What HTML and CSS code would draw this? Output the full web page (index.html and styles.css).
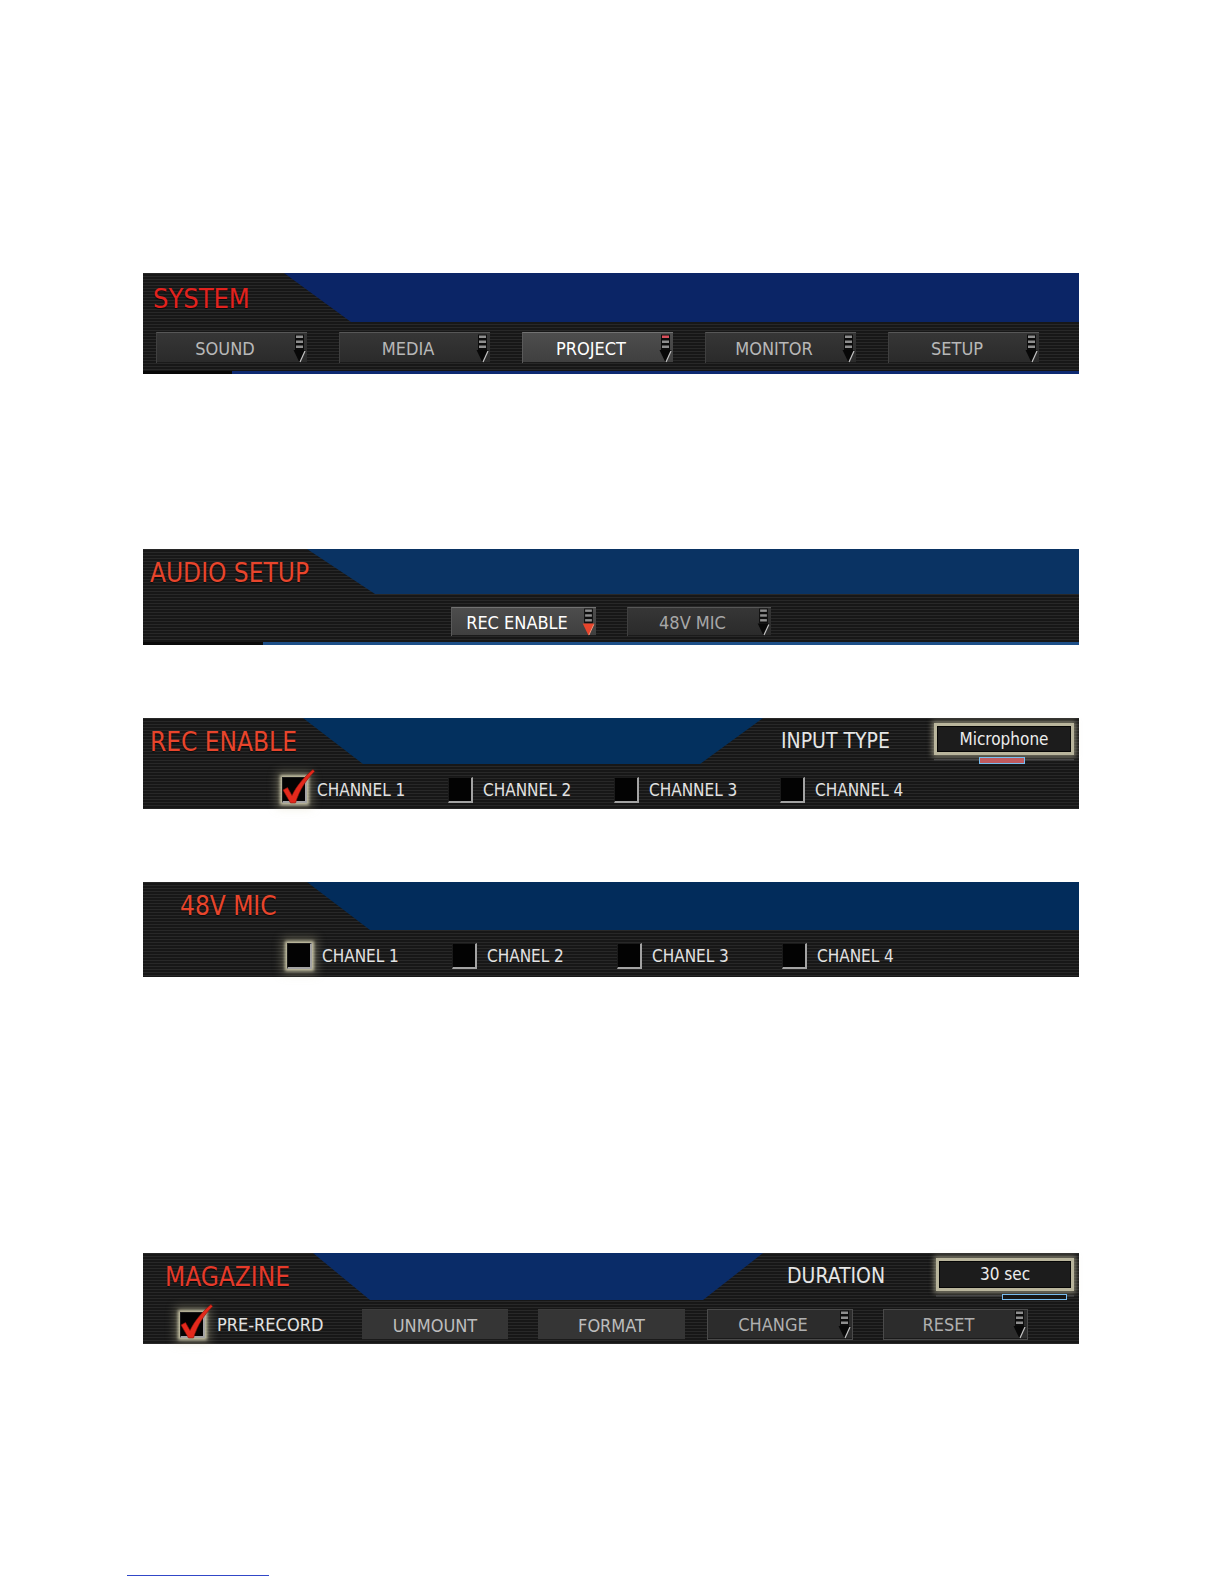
FILE: index.html
```html
<!DOCTYPE html>
<html lang="en">
<head>
<meta charset="utf-8">
<title>Menus</title>
<link rel="stylesheet" href="styles.css">
</head>
<body>
<svg class="defs" width="0" height="0" aria-hidden="true">
  <defs>
    <symbol id="arrow" viewBox="0 0 13 29">
      <rect x="2" y="0.5" width="9" height="15.5" fill="#0c0c0c"/>
      <rect x="3" y="1.5" width="7" height="2.5" fill="#8e8e8e"/>
      <rect x="3" y="6.5" width="7" height="2.5" fill="#8e8e8e"/>
      <rect x="3" y="11.5" width="7" height="2.5" fill="#8e8e8e"/>
      <polygon points="0.5,16 12.5,16 6.5,28.5" fill="#080808"/>
      <line x1="12" y1="17" x2="7" y2="28" stroke="#c4c4c4" stroke-width="1.2"/>
    </symbol>
    <symbol id="arrow-top" viewBox="0 0 13 29">
      <rect x="2" y="0.5" width="9" height="15.5" fill="#0c0c0c"/>
      <rect x="3" y="1.5" width="7" height="2.5" fill="#d8505c"/>
      <rect x="3" y="6.5" width="7" height="2.5" fill="#8e8e8e"/>
      <rect x="3" y="11.5" width="7" height="2.5" fill="#8e8e8e"/>
      <polygon points="0.5,16 12.5,16 6.5,28.5" fill="#080808"/>
      <line x1="12" y1="17" x2="7" y2="28" stroke="#c4c4c4" stroke-width="1.2"/>
    </symbol>
    <symbol id="arrow-red" viewBox="0 0 13 29">
      <rect x="2" y="0.5" width="9" height="15.5" fill="#0c0c0c"/>
      <rect x="3" y="1.5" width="7" height="2.5" fill="#8e8e8e"/>
      <rect x="3" y="6.5" width="7" height="2.5" fill="#8e8e8e"/>
      <rect x="3" y="11.5" width="7" height="2.5" fill="#8e8e8e"/>
      <polygon points="0.5,16 12.5,16 6.5,28.5" fill="#e8452c"/>
      <line x1="12" y1="17" x2="7" y2="28" stroke="#f39a80" stroke-width="1"/>
    </symbol>
    <symbol id="check" viewBox="-3 -10 40 40">
      <path d="M1 13 L5.5 10.5 L10 18.5 C14.5 9 21.5 0.5 31 -7.5 L32.5 -5.5 C24 3 17.5 13 13.5 26 L8.5 26 Z" fill="#e3291c" stroke="#8a140a" stroke-width="0.6"/>
    </symbol>
  </defs>
</svg>
<main class="page">

  <section class="panel p1">
    <header class="head">
      <h1 class="title">SYSTEM</h1>
      <div class="blue"></div>
    </header>
    <div class="row">
      <div class="btn"><span class="lbl">SOUND</span><svg class="arr"><use href="#arrow"/></svg></div>
      <div class="btn"><span class="lbl">MEDIA</span><svg class="arr"><use href="#arrow"/></svg></div>
      <div class="btn active"><span class="lbl">PROJECT</span><svg class="arr"><use href="#arrow-top"/></svg></div>
      <div class="btn"><span class="lbl">MONITOR</span><svg class="arr"><use href="#arrow"/></svg></div>
      <div class="btn"><span class="lbl">SETUP</span><svg class="arr"><use href="#arrow"/></svg></div>
    </div>
    <div class="foot"></div>
  </section>

  <section class="panel p2">
    <header class="head">
      <h2 class="title">AUDIO SETUP</h2>
      <div class="blue"></div>
    </header>
    <div class="row">
      <div class="btn active"><span class="lbl">REC ENABLE</span><svg class="arr"><use href="#arrow-red"/></svg></div>
      <div class="btn"><span class="lbl">48V MIC</span><svg class="arr"><use href="#arrow"/></svg></div>
    </div>
    <div class="foot"></div>
  </section>

  <section class="panel p3">
    <header class="head">
      <h2 class="title">REC ENABLE</h2>
      <div class="blue"></div>
      <div class="side">
        <span class="side-lbl">INPUT TYPE</span>
        <div class="valcol">
          <div class="vbox">Microphone</div>
          <div class="slider"><i class="knob"></i></div>
        </div>
      </div>
    </header>
    <div class="row">
      <div class="item"><span class="cb glow"><svg class="chk"><use href="#check"/></svg></span><span class="txt">CHANNEL 1</span></div>
      <div class="item"><span class="cb"></span><span class="txt">CHANNEL 2</span></div>
      <div class="item"><span class="cb"></span><span class="txt">CHANNEL 3</span></div>
      <div class="item"><span class="cb"></span><span class="txt">CHANNEL 4</span></div>
    </div>
  </section>

  <section class="panel p4">
    <header class="head">
      <h2 class="title">48V MIC</h2>
      <div class="blue"></div>
    </header>
    <div class="row">
      <div class="item"><span class="cb glow"></span><span class="txt">CHANEL 1</span></div>
      <div class="item"><span class="cb"></span><span class="txt">CHANEL 2</span></div>
      <div class="item"><span class="cb"></span><span class="txt">CHANEL 3</span></div>
      <div class="item"><span class="cb"></span><span class="txt">CHANEL 4</span></div>
    </div>
  </section>

  <section class="panel p5">
    <header class="head">
      <h2 class="title">MAGAZINE</h2>
      <div class="blue"></div>
      <div class="side">
        <span class="side-lbl">DURATION</span>
        <div class="valcol">
          <div class="vbox">30 sec</div>
          <div class="slider"><i class="knob"></i></div>
        </div>
      </div>
    </header>
    <div class="row">
      <div class="item"><span class="cb glow"><svg class="chk"><use href="#check"/></svg></span><span class="txt">PRE-RECORD</span></div>
      <div class="btn flat b-unmount"><span class="lbl">UNMOUNT</span></div>
      <div class="btn flat b-format"><span class="lbl">FORMAT</span></div>
      <div class="btn framed b-change"><span class="lbl">CHANGE</span><svg class="arr"><use href="#arrow"/></svg></div>
      <div class="btn framed b-reset"><span class="lbl">RESET</span><svg class="arr"><use href="#arrow"/></svg></div>
    </div>
  </section>

  <div class="footnote"></div>
</main>
</body>
</html>
```

FILE: styles.css
```css
* {
  box-sizing: border-box;
  margin: 0;
  padding: 0;
}

body {
  margin: 0;
  background: #ffffff;
  font-family: "DejaVu Sans Condensed", "DejaVu Sans", sans-serif;
  font-stretch: condensed;
}

.defs {
  position: absolute;
  width: 0;
  height: 0;
  overflow: hidden;
}

.page {
  width: 1224px;
  padding-left: 143px;
  padding-top: 273px;
  padding-bottom: 8px;
}

.panel {
  width: 936px;
  background-color: #1b1b1b;
  background-image: repeating-linear-gradient(to bottom, #282828 0, #282828 1px, #171717 1px, #171717 3px);
}

.p2 { margin-top: 175px; }
.p3 { margin-top: 73px; }
.p4 { margin-top: 73px; }
.p5 { margin-top: 276px; }

/* ---------- header ---------- */
.head {
  display: grid;
  height: 45px;
}

.title {
  position: relative;
  z-index: 1;
  font-size: 26px;
  line-height: 26px;
  font-weight: normal;
  color: #e8452c;
  white-space: nowrap;
  padding-top: 11px;
  padding-left: 8px;
  text-shadow: 0 1px 1px rgba(0, 0, 0, 0.7);
}

.blue {
  background: #03305e;
}

.p1 .head { height: 49px; grid-template-columns: 141px 1fr; }
.p1 .title { font-size: 27px; line-height: 27px; padding-top: 12px; padding-left: 10px; color: #e2221e; }
.p1 .blue { background: #0b2566; clip-path: polygon(0 0, 100% 0, 100% 100%, 67px 100%); }

.p2 .head { grid-template-columns: 164px 1fr; }
.p2 .title { padding-left: 7px; }
.p2 .blue { background: #0a3363; clip-path: polygon(0 0, 100% 0, 100% 100%, 68px 100%); }

.p3 .head { grid-template-columns: 160px 460px 1fr; }
.p3 .title { padding-left: 7px; }
.p3 .blue { background: #03305e; clip-path: polygon(0 0, 100% 0, calc(100% - 63px) 100%, 60px 100%); }

.p4 .head { height: 48px; grid-template-columns: 164px 1fr; }
.p4 .title { padding-left: 37px; }
.p4 .blue { background: #022c5b; clip-path: polygon(0 0, 100% 0, 100% 100%, 63px 100%); }

.p5 .head { grid-template-columns: 170px 450px 1fr; }
.p5 .title { padding-left: 22px; color: #e53a2a; }
.p5 .blue { background: #0a2c68; clip-path: polygon(0 0, 100% 0, calc(100% - 60px) 100%, 57px 100%); }

/* ---------- right side value selector ---------- */
.side {
  display: flex;
  align-items: flex-start;
  padding-top: 5px;
  padding-right: 5px;
}

.p3 .side { padding-left: 18px; }
.p5 .side { padding-left: 24px; }

.side-lbl {
  margin-top: 8px;
  font-size: 21px;
  line-height: 21px;
  color: #e6e6e6;
  white-space: nowrap;
}

.valcol {
  margin-left: auto;
  width: 140px;
}

.p5 .valcol { width: 138px; }

.vbox {
  height: 32px;
  display: flex;
  align-items: center;
  justify-content: center;
  background: #1c1c1c;
  border: 3px solid #b9b59c;
  box-shadow: 0 0 5px 2px rgba(225, 220, 185, 0.5), inset 0 0 0 1px #050505;
  color: #ececec;
  font-size: 17px;
  padding-bottom: 1px;
}

.p5 .vbox { height: 33px; }

.slider {
  display: flex;
  align-items: center;
  height: 7px;
  margin-top: 2px;
  background: linear-gradient(to bottom, transparent 2px, #505050 2px, #2e2e2e 4px, transparent 4px);
}

.knob {
  display: block;
  flex: none;
  height: 7px;
  border: 1px solid #78bdf0;
}

.p3 .knob { width: 46px; margin-left: 45px; background: #c05a5e; }
.p5 .knob { width: 65px; margin-left: 66px; height: 6px; background: #161616; }

/* ---------- rows ---------- */
.row {
  display: flex;
  align-items: center;
}

.p1 .row { margin-top: 10px; margin-bottom: 8px; height: 31px; padding-left: 13px; gap: 32px; }
.p2 .row { margin-top: 13px; margin-bottom: 6px; height: 29px; padding-left: 308px; gap: 31px; }
.p3 .row { height: 46px; padding-left: 139px; padding-top: 7px; }
.p4 .row { height: 47px; padding-left: 144px; padding-top: 5px; }
.p5 .row { height: 46px; padding-left: 37px; padding-top: 7px; }

.foot {
  height: 3px;
}

.p1 .foot { background: linear-gradient(to right, #070707 0, #070707 89px, #0e2a72 89px); }
.p2 .foot { background: linear-gradient(to right, #0a0a0a 0, #0a0a0a 120px, #1d4f88 120px); }

/* ---------- buttons ---------- */
.btn {
  display: flex;
  align-items: center;
  flex: none;
  width: 151px;
  height: 31px;
  background: linear-gradient(to bottom, #363636, #2a2a2a);
  border-top: 1px solid #575757;
  border-left: 1px solid #3f3f3f;
  box-shadow: inset 0 -1px 0 #1a1a1a;
  color: #b8b8b8;
  font-size: 18px;
}

.btn .lbl {
  flex: 1;
  text-align: center;
  white-space: nowrap;
}

.btn .arr {
  flex: none;
  width: 13px;
  height: 29px;
  margin-right: 1px;
}

.btn.active {
  background: linear-gradient(to bottom, #4d4d4d, #3f3f3f);
  border-top-color: #727272;
  border-left-color: #5a5a5a;
  color: #ffffff;
}

.p2 .btn { width: 145px; height: 29px; }
.p2 .btn .arr { height: 28px; }
.p2 .btn + .btn { width: 144px; color: #a8a8a8; }

.btn.flat {
  background: #353535;
  border-top: 1px solid #3c3c3c;
  border-left: none;
  color: #bdbdbd;
}

.btn.framed {
  background: #2c2c2c;
  border: 1px solid #4a4a4a;
  color: #b0b0b0;
}

.b-unmount { width: 146px; }
.b-format { width: 147px; margin-left: 30px; }
.b-change { width: 146px; margin-left: 22px; }
.b-reset { width: 145px; margin-left: 30px; }

/* ---------- checkboxes ---------- */
.item {
  display: flex;
  align-items: center;
  gap: 10px;
  flex: none;
  width: 166px;
}

.p4 .item { width: 165px; }
.p5 .item { width: 182px; gap: 12px; }

.cb {
  position: relative;
  flex: none;
  width: 25px;
  height: 26px;
  background: #030303;
  border-right: 2px solid #a3a3a3;
  border-bottom: 2px solid #a3a3a3;
  border-top: 1px solid #1a1a1a;
  border-left: 1px solid #1a1a1a;
}

.cb.glow {
  box-shadow: 0 0 3px 2px rgba(240, 235, 200, 0.75), 0 0 9px 5px rgba(205, 200, 160, 0.35);
}

.chk {
  position: absolute;
  left: -4px;
  top: -11px;
  width: 40px;
  height: 40px;
  overflow: visible;
}

.txt {
  font-size: 17px;
  color: #e2e2e2;
  white-space: nowrap;
}

.p5 .txt { font-size: 18px; }

/* ---------- footnote rule ---------- */
.footnote {
  margin-top: 231px;
  margin-left: -16px;
  width: 142px;
  height: 1px;
  background: #3148c8;
}
```
